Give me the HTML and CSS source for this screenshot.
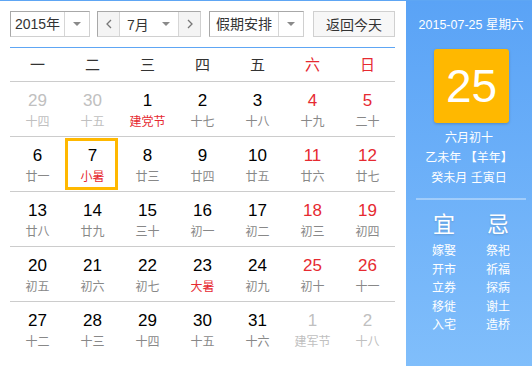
FILE: index.html
```html
<!DOCTYPE html>
<html>
  <head>
    <title>万年历</title>
    <meta charset="utf-8">
    <link rel="stylesheet" href="styles.css">
  </head>
  <body>
    <div class="calendar">
      <div class="main">
        <div class="toolbar">
          <div class="select year">
            <span class="select-text">2015年</span>
            <span class="select-btn"><i class="caret"></i></span>
          </div>
          <div class="select month">
            <span class="nav"><svg width="6" height="10" viewBox="0 0 6 10"><polyline points="5,1 1,5 5,9" fill="none" stroke="#777" stroke-width="1.3"/></svg></span>
            <span class="month-text">7月<i class="caret"></i></span>
            <span class="nav"><svg width="6" height="10" viewBox="0 0 6 10"><polyline points="1,1 5,5 1,9" fill="none" stroke="#777" stroke-width="1.3"/></svg></span>
          </div>
          <div class="select holiday">
            <span class="select-text">假期安排</span>
            <span class="select-btn"><i class="caret"></i></span>
          </div>
          <button class="today-btn">返回今天</button>
        </div>

        <div class="weekdays">
          <span>一</span><span>二</span><span>三</span><span>四</span><span>五</span>
          <span class="weekend">六</span><span class="weekend">日</span>
        </div>

        <div class="days">
          <div class="day other"><b>29</b><em>十四</em></div>
          <div class="day other"><b>30</b><em>十五</em></div>
          <div class="day"><b>1</b><em class="fest">建党节</em></div>
          <div class="day"><b>2</b><em>十七</em></div>
          <div class="day"><b>3</b><em>十八</em></div>
          <div class="day weekend"><b>4</b><em>十九</em></div>
          <div class="day weekend"><b>5</b><em>二十</em></div>

          <div class="day"><b>6</b><em>廿一</em></div>
          <div class="day selected"><b>7</b><em class="fest">小暑</em></div>
          <div class="day"><b>8</b><em>廿三</em></div>
          <div class="day"><b>9</b><em>廿四</em></div>
          <div class="day"><b>10</b><em>廿五</em></div>
          <div class="day weekend"><b>11</b><em>廿六</em></div>
          <div class="day weekend"><b>12</b><em>廿七</em></div>

          <div class="day"><b>13</b><em>廿八</em></div>
          <div class="day"><b>14</b><em>廿九</em></div>
          <div class="day"><b>15</b><em>三十</em></div>
          <div class="day"><b>16</b><em>初一</em></div>
          <div class="day"><b>17</b><em>初二</em></div>
          <div class="day weekend"><b>18</b><em>初三</em></div>
          <div class="day weekend"><b>19</b><em>初四</em></div>

          <div class="day"><b>20</b><em>初五</em></div>
          <div class="day"><b>21</b><em>初六</em></div>
          <div class="day"><b>22</b><em>初七</em></div>
          <div class="day"><b>23</b><em class="fest">大暑</em></div>
          <div class="day"><b>24</b><em>初九</em></div>
          <div class="day weekend"><b>25</b><em>初十</em></div>
          <div class="day weekend"><b>26</b><em>十一</em></div>

          <div class="day last"><b>27</b><em>十二</em></div>
          <div class="day last"><b>28</b><em>十三</em></div>
          <div class="day last"><b>29</b><em>十四</em></div>
          <div class="day last"><b>30</b><em>十五</em></div>
          <div class="day last"><b>31</b><em>十六</em></div>
          <div class="day last other"><b>1</b><em>建军节</em></div>
          <div class="day last other"><b>2</b><em>十八</em></div>
        </div>
      </div>

      <div class="side">
        <div class="side-date">2015-07-25 星期六</div>
        <div class="big-day">25</div>
        <div class="lunar">
          <p>六月初十</p>
          <p>乙未年 【羊年】</p>
          <p>癸未月 壬寅日</p>
        </div>
        <div class="side-line"></div>
        <div class="almanac">
          <div class="almanac-col">
            <h3>宜</h3>
            <p>嫁娶</p><p>开市</p><p>立券</p><p>移徙</p><p>入宅</p>
          </div>
          <div class="almanac-col">
            <h3>忌</h3>
            <p>祭祀</p><p>祈福</p><p>探病</p><p>谢土</p><p>造桥</p>
          </div>
        </div>
      </div>
    </div>
  </body>
</html>
```

FILE: styles.css
```css
:root {
  --blue: #5ea6f4;
  --yellow: #ffb800;
  --red: #e62a31;
  --text: #333333;
  --muted: #888888;
  --faint: #c0c0c0;
  --line: #cccccc;
}

body {
  margin: 0;
  font-family: 'Liberation Sans', 'Noto Sans CJK SC', sans-serif;
  color: var(--text);
  background: #fff;
}

.calendar {
  width: 532px;
  height: 366px;
  box-sizing: border-box;
  border-top: 1px solid var(--blue);
  display: flex;
  overflow: hidden;
}

.main {
  width: 406px;
  box-sizing: border-box;
  padding: 10px 11px 0 10px;
}

/* Toolbar */
.toolbar {
  display: flex;
  height: 26px;
  font-size: 14px;
}

.select {
  display: flex;
  height: 26px;
  box-sizing: border-box;
  border: 1px solid #d0d0d0;
  border-top-color: #a8a8a8;
  border-left-color: #a8a8a8;
  background: #fff;
}

.select-text {
  flex: 1;
  line-height: 24px;
  text-align: center;
}

.select-btn {
  width: 24px;
  border-left: 1px solid #d6d6d6;
  display: flex;
  align-items: center;
  justify-content: center;
}

.caret {
  display: inline-block;
  width: 0;
  height: 0;
  border-left: 4px solid transparent;
  border-right: 4px solid transparent;
  border-top: 4px solid #8a8a8a;
}

.year {
  width: 80px;
}

.month {
  width: 104px;
  margin-left: 7px;
}

.month .nav {
  width: 21px;
  background: #f4f4f4;
  display: flex;
  align-items: center;
  justify-content: center;
}

.month .nav:first-child {
  border-right: 1px solid #d6d6d6;
}

.month .nav:last-child {
  border-left: 1px solid #d6d6d6;
}

.month-text {
  flex: 1;
  display: flex;
  align-items: center;
  justify-content: space-between;
  padding: 0 8px 0 7px;
}

.holiday {
  width: 95px;
  margin-left: 8px;
}

.today-btn {
  margin-left: auto;
  width: 82px;
  height: 26px;
  padding: 0;
  border: 1px solid #d0d0d0;
  background: #f7f7f7;
  font-family: inherit;
  font-size: 14px;
  color: var(--text);
}

/* Week header */
.weekdays {
  margin-top: 10px;
  border-top: 1px solid var(--blue);
  border-bottom: 1px solid var(--line);
  display: grid;
  grid-template-columns: repeat(7, 55px);
  height: 33px;
  line-height: 33px;
  text-align: center;
  font-size: 15px;
}

.weekdays .weekend {
  color: var(--red);
}

/* Days grid */
.days {
  display: grid;
  grid-template-columns: repeat(7, 55px);
}

.day {
  position: relative;
  height: 45px;
  padding-top: 9px;
  border-bottom: 1px solid var(--line);
  text-align: center;
}

.day.last {
  border-bottom: none;
}

.day b {
  display: block;
  font-weight: normal;
  font-size: 17px;
  line-height: 20px;
  color: #000;
}

.day em {
  display: block;
  font-style: normal;
  font-size: 12px;
  line-height: 16px;
  margin-top: 3px;
  color: var(--muted);
}

.day.weekend b {
  color: var(--red);
}

.day em.fest {
  color: var(--red);
}

.day.other b,
.day.other em {
  color: var(--faint);
}

.day.selected::after {
  content: '';
  position: absolute;
  top: 1px;
  left: 0;
  right: 2px;
  bottom: 1px;
  border: 3px solid var(--yellow);
}

/* Side panel */
.side {
  width: 126px;
  background: linear-gradient(#5aa3f6, #80befb);
  color: #fff;
  display: flex;
  flex-direction: column;
}

.side-date {
  margin-top: 15px;
  padding-left: 4px;
  text-align: center;
  font-size: 12.5px;
  line-height: 18px;
}

.big-day {
  width: 75px;
  height: 74px;
  margin: 15px 0 0 28px;
  background: var(--yellow);
  border-radius: 3px;
  box-shadow: 0 1px 3px rgba(0, 0, 0, 0.2);
  font-size: 46px;
  line-height: 74px;
  text-align: center;
}

.lunar {
  margin-top: 5px;
  text-align: center;
  font-size: 12px;
  line-height: 20px;
}

.lunar p {
  margin: 0;
}

.side-line {
  height: 2px;
  margin: 10px 6px 0 10px;
  background: rgba(255, 255, 255, 0.35);
}

.almanac {
  display: flex;
  margin: 12px 0 0 16px;
  gap: 10px;
}

.almanac-col {
  width: 44px;
  text-align: center;
}

.almanac-col h3 {
  margin: 0 0 4px;
  font-size: 22px;
  line-height: 26px;
  font-weight: normal;
  text-shadow: 0 1px 2px rgba(0, 0, 0, 0.15);
}

.almanac-col p {
  margin: 0;
  font-size: 12px;
  line-height: 18.5px;
}
```
